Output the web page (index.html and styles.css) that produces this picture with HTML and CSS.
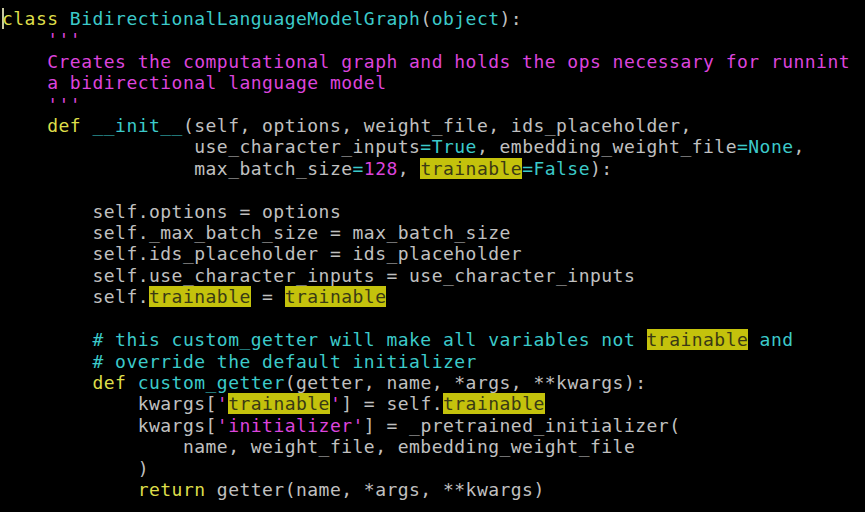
FILE: index.html
```html
<!DOCTYPE html>
<html>
<head>
<meta charset="utf-8">
<link rel="stylesheet" href="styles.css">
</head>
<body>
<pre class="code"><span class="kw"><span class="cursor">c</span>lass</span> <span class="fn">BidirectionalLanguageModelGraph</span>(<span class="fn">object</span>):
    <span class="str">'''</span>
    <span class="str">Creates the computational graph and holds the ops necessary for runnint</span>
    <span class="str">a bidirectional language model</span>
    <span class="str">'''</span>
    <span class="kw">def</span> <span class="fn">__init__</span>(self, options, weight_file, ids_placeholder,
                 use_character_inputs<span class="fn">=True</span>, embedding_weight_file<span class="fn">=None</span>,
                 max_batch_size<span class="fn">=</span><span class="str">128</span>, <span class="hl">trainable</span><span class="fn">=False</span>):

        self.options = options
        self._max_batch_size = max_batch_size
        self.ids_placeholder = ids_placeholder
        self.use_character_inputs = use_character_inputs
        self.<span class="hl">trainable</span> = <span class="hl">trainable</span>

        <span class="cm"># this custom_getter will make all variables not </span><span class="hl">trainable</span><span class="cm"> and</span>
        <span class="cm"># override the default initializer</span>
        <span class="kw">def</span> <span class="fn">custom_getter</span>(getter, name, *args, **kwargs):
            kwargs[<span class="str">'</span><span class="hl">trainable</span><span class="str">'</span>] = self.<span class="hl">trainable</span>
            kwargs[<span class="str">'initializer'</span>] = _pretrained_initializer(
                name, weight_file, embedding_weight_file
            )
            <span class="kw">return</span> getter(name, *args, **kwargs)
</pre>
</body>
</html>
```
FILE: styles.css
```css
html, body {
  margin: 0;
  padding: 0;
  background: #000;
  width: 865px;
  height: 512px;
  overflow: hidden;
}
.code {
  margin: 0;
  padding: 8px 0 0 2px;
  font-family: "DejaVu Sans Mono", "Liberation Mono", monospace;
  font-size: 18px;
  letter-spacing: 0.47px;
  line-height: 21.4px;
  color: #c0c0c0;
  white-space: pre;
}
.kw { color: #dede4a; }
.fn { color: #3ccaca; }
.str { color: #dc44dc; }
.cm { color: #3ccaca; }
.hl {
  background: #c4c20c;
  color: #3a3a14;
}
.cursor {
  box-shadow: inset 2px 0 0 #c8c8a0;
}
```
